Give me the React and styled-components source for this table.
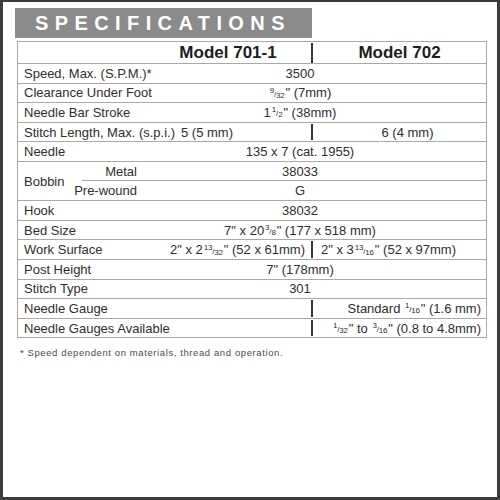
import React from "react";
import styled, { createGlobalStyle } from "styled-components";

const GlobalStyle = createGlobalStyle`
    html, body {
        margin: 0;
        padding: 0;
        background: #ffffff;
    }
    body {
        font-family: "Liberation Sans", Arial, sans-serif;
    }
`;

const Frame = styled.div`
    box-sizing: border-box;
    width: 500px;
    height: 500px;
    border: 3px solid #3c3c3c;
    border-top-width: 2px;
    background: #ffffff;
    padding: 6px 0 0 12px;
`;

const TitleBar = styled.div`
    box-sizing: border-box;
    width: 297px;
    height: 30px;
    background: #8b8b8b;
    color: #ffffff;
    font-weight: bold;
    font-size: 20px;
    letter-spacing: 6.4px;
    line-height: 31px;
    padding-left: 20px;
    white-space: nowrap;
    overflow: hidden;
`;

const Table = styled.div`
    box-sizing: border-box;
    width: 470px;
    margin: 3px 0 0 2px;
    border: 1px solid #a9a9a9;
    border-bottom: none;
    color: #2e2e2e;
    font-size: 13px;
`;

const Row = styled.div`
    box-sizing: border-box;
    display: grid;
    grid-template-columns: 127px 166px 1fr;
    height: ${(p) => p.$height || 19.6}px;
    border-bottom: 1px solid #a9a9a9;
    align-items: stretch;
`;

const Label = styled.div`
    display: flex;
    align-items: center;
    padding-left: 6px;
    white-space: nowrap;
`;

const Cell = styled.div`
    display: flex;
    align-items: center;
    justify-content: ${(p) => p.$align || "center"};
    padding-right: ${(p) => p.$pr || 0}px;
    padding-left: ${(p) => p.$pl || 0}px;
    white-space: nowrap;
    ${(p) => p.$divided && "border-left: 2px solid #353535; margin: 1px 0;"}
`;

const Merged = styled(Cell)`
    grid-column: 2 / 4;
    padding-right: 31px;
`;

const HeadCell = styled(Cell)`
    font-weight: bold;
    font-size: 17px;
    color: #1e1e1e;
`;

const BobbinRow = styled.div`
    box-sizing: border-box;
    display: grid;
    grid-template-columns: 64px 1fr;
    height: 39.2px;
    border-bottom: 1px solid #a9a9a9;
`;

const SubRows = styled.div`
    display: grid;
    grid-template-rows: 1fr 1fr;
`;

const SubRow = styled.div`
    display: grid;
    grid-template-columns: 63px 1fr;
    ${(p) => p.$lined && "border-bottom: 1px solid #a9a9a9;"}
`;

const SubLabel = styled.div`
    display: flex;
    align-items: center;
    justify-content: flex-end;
    padding-right: 8px;
    white-space: nowrap;
`;

const SubValue = styled(Cell)`
    padding-right: 31px;
`;

const Frac = styled.span`
    font-size: 8px;
    margin: 0 1px;
    letter-spacing: -0.2px;
    & > .n {
        vertical-align: 4px;
    }
    & > .d {
        vertical-align: -1px;
    }
`;

const Footnote = styled.div`
    margin: 9px 0 0 5px;
    font-size: 9.5px;
    letter-spacing: 0.6px;
    color: #4a4a4a;
`;

const F = ({ n, d }) => (
    <Frac>
        <span className="n">{n}</span>/<span className="d">{d}</span>
    </Frac>
);

export default function App() {
    return (
        <>
            <GlobalStyle />
            <Frame>
                <TitleBar>SPECIFICATIONS</TitleBar>
                <Table>
                    <Row $height={22}>
                        <Label />
                        <HeadCell>Model 701-1</HeadCell>
                        <HeadCell $divided>Model 702</HeadCell>
                    </Row>
                    <Row>
                        <Label>Speed, Max. (S.P.M.)*</Label>
                        <Merged>3500</Merged>
                    </Row>
                    <Row>
                        <Label>Clearance Under Foot</Label>
                        <Merged>
                            <F n="9" d="32" />" (7mm)
                        </Merged>
                    </Row>
                    <Row>
                        <Label>Needle Bar Stroke</Label>
                        <Merged>
                            1<F n="1" d="2" />" (38mm)
                        </Merged>
                    </Row>
                    <Row>
                        <Label>Stitch Length, Max. (s.p.i.)</Label>
                        <Cell $align="flex-end" $pr={78}>5 (5 mm)</Cell>
                        <Cell $divided $pl={16}>6 (4 mm)</Cell>
                    </Row>
                    <Row>
                        <Label>Needle</Label>
                        <Merged>135 x 7 (cat. 1955)</Merged>
                    </Row>
                    <BobbinRow>
                        <Label>Bobbin</Label>
                        <SubRows>
                            <SubRow $lined>
                                <SubLabel>Metal</SubLabel>
                                <SubValue>38033</SubValue>
                            </SubRow>
                            <SubRow>
                                <SubLabel>Pre-wound</SubLabel>
                                <SubValue>G</SubValue>
                            </SubRow>
                        </SubRows>
                    </BobbinRow>
                    <Row>
                        <Label>Hook</Label>
                        <Merged>38032</Merged>
                    </Row>
                    <Row>
                        <Label>Bed Size</Label>
                        <Merged>
                            7" x 20<F n="3" d="8" />" (177 x 518 mm)
                        </Merged>
                    </Row>
                    <Row>
                        <Label>Work Surface</Label>
                        <Cell $align="flex-end" $pr={6}>
                            2" x 2<F n="13" d="32" />" (52 x 61mm)
                        </Cell>
                        <Cell $divided $align="flex-start" $pl={8}>
                            2" x 3<F n="13" d="16" />" (52 x 97mm)
                        </Cell>
                    </Row>
                    <Row>
                        <Label>Post Height</Label>
                        <Merged>7" (178mm)</Merged>
                    </Row>
                    <Row>
                        <Label>Stitch Type</Label>
                        <Merged>301</Merged>
                    </Row>
                    <Row>
                        <Label>Needle Gauge</Label>
                        <Cell />
                        <Cell $divided $align="flex-end" $pr={5}>
                            Standard&nbsp;<F n="1" d="16" />" (1.6 mm)
                        </Cell>
                    </Row>
                    <Row>
                        <Label>Needle Gauges Available</Label>
                        <Cell />
                        <Cell $divided $align="flex-end" $pr={5}>
                            <F n="1" d="32" />"&nbsp;to&nbsp;<F n="3" d="16" />" (0.8 to 4.8mm)
                        </Cell>
                    </Row>
                </Table>
                <Footnote>* Speed dependent on materials, thread and operation.</Footnote>
            </Frame>
        </>
    );
}
